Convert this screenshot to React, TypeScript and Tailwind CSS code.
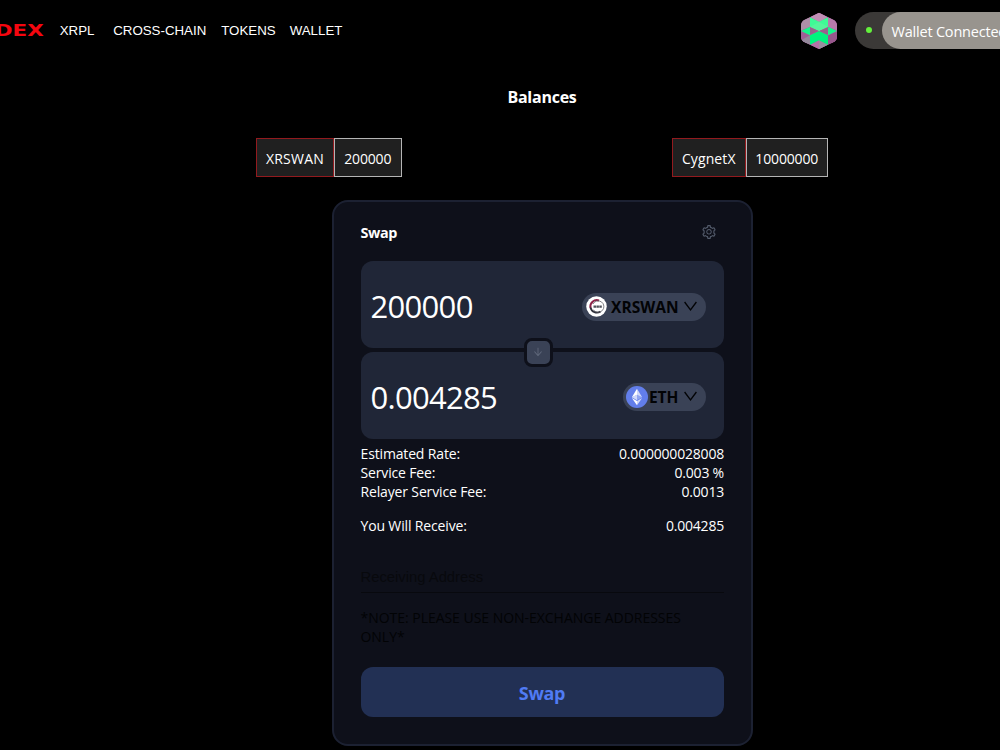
import type { ReactNode } from "react";
import { AiOutlineArrowDown, AiOutlineSetting } from "react-icons/ai";

const navItems = [
  { label: "XRPL", cls: "w-[53.5px]" },
  { label: "CROSS-CHAIN", cls: "w-[108px]" },
  { label: "TOKENS", cls: "w-[68.5px]" },
  { label: "WALLET", cls: "w-[60px]" },
];

function Avatar() {
  return (
    <svg width="38" height="38" viewBox="0 0 114 114" className="shrink-0">
      <clipPath id="hex">
        <path d="M57 2 L100 23 Q111 29 111 40 V76 Q111 85 100 91 L57 111 L14 91 Q3 85 3 76 V40 Q3 29 14 23 Z" />
      </clipPath>
      <g clipPath="url(#hex)">
        <rect width="114" height="114" fill="#a8649b" />
        <path d="M57 0 L84 15 L57 30 L30 15Z" fill="#c08fb5" />
        <path d="M0 29 L30 15 V44 L0 57Z" fill="#ad8fa8" />
        <path d="M114 29 L84 15 V44 L114 57Z" fill="#b77bab" />
        <path d="M0 57 L30 70 V98 L0 86Z" fill="#a05f96" />
        <path d="M0 86 L30 70 V98Z" fill="#94899c" />
        <path d="M114 57 L84 70 V98 L114 86Z" fill="#98578c" />
        <path d="M57 84 L84 98 L57 114 L30 98Z" fill="#b273a6" />
        <path d="M57 84 L84 98 L57 114Z" fill="#9a8e9f" />
        <path d="M30 16 L57 29 L84 16 V44 L57 56 L30 44Z" fill="#3efb96" />
        <path d="M30 44 L57 30 L84 44 L57 57Z" fill="#55f59c" />
        <path d="M30 70 L57 57 L84 70 V98 L57 85 L30 98Z" fill="#00f47d" />
        <path d="M3 57 L30 44 V70Z M111 57 L84 44 V70Z" fill="#16f78a" />
        <path d="M30 46 L56 57 L30 68Z M84 46 L58 57 L84 68Z" fill="#98618c" />
      </g>
    </svg>
  );
}

function SwanIcon() {
  return (
    <svg width="21" height="21" viewBox="0 0 42 42">
      <circle cx="21" cy="21" r="20.5" fill="#fff" />
      <path d="M26 9 A13 13 0 0 0 9 24" fill="none" stroke="#8c2348" strokeWidth="4" />
      <path d="M9 23 A13 13 0 0 0 29 31" fill="none" stroke="#30313c" strokeWidth="3.5" />
      <path d="M14 16 A11.5 11.5 0 1 1 15 28" fill="none" stroke="#55565c" strokeWidth="1.5" />
      <path d="M15 21 h17" stroke="#50525a" strokeWidth="4.5" strokeDasharray="5 .8" />
    </svg>
  );
}

function EthIcon() {
  return (
    <svg width="22" height="22" viewBox="0 0 32 32">
      <circle cx="16" cy="16" r="16" fill="#627eea" />
      <path d="M16 4v8.87l7.5 3.35z" fill="#fff" fillOpacity=".7" />
      <path d="M16 4L8.5 16.22l7.5-3.35z" fill="#fff" />
      <path d="M16 21.97V28l7.5-10.38z" fill="#fff" fillOpacity=".7" />
      <path d="M16 28v-6.03l-7.5-4.35z" fill="#fff" />
      <path d="M16 20.57l7.5-4.35-7.5-3.35z" fill="#fff" fillOpacity=".3" />
      <path d="M8.5 16.22l7.5 4.35v-7.7z" fill="#fff" fillOpacity=".7" />
    </svg>
  );
}

function ChevronDown() {
  return (
    <svg width="15" height="15" viewBox="0 0 15 15" className="mb-[1px] shrink-0">
      <path d="M1.6 3 L7.5 11 L13.4 3" fill="none" stroke="currentColor" strokeWidth="1.3" />
    </svg>
  );
}

function Balance({ name, amount, left, right }: { name: string; amount: string; left: string; right: string }) {
  return (
    <div className="flex h-[39px] text-[14px] leading-[39px] text-white">
      <div className={`${left} flex items-center justify-center border border-[#921a1e] bg-[#202020] pt-[1px]`}>{name}</div>
      <div className={`${right} flex items-center justify-center border border-[#b5b5b5] bg-[#202020] pt-[1px]`}>{amount}</div>
    </div>
  );
}

function AmountPanel({ amount, children }: { amount: string; children: ReactNode }) {
  return (
    <div className="flex h-[87px] items-center justify-between rounded-[12px] bg-[#202637] pr-[18px] pl-[10px]">
      <div className="pt-[4px] text-[31px] tracking-[-0.7px] text-white">{amount}</div>
      {children}
    </div>
  );
}

function Row({ label, value }: { label: string; value: string }) {
  return (
    <div className="flex h-[19px] items-center justify-between">
      <span className="tracking-[-0.15px]">{label}</span>
      <span className="mr-[-0.5px] tracking-[-0.2px]">{value}</span>
    </div>
  );
}

export default function App() {
  return (
    <div className="h-[750px] w-full overflow-hidden bg-black font-['Open_Sans','Noto_Sans',sans-serif]">
      <div className="w-[1084px]">
        <header className="flex h-[61px] items-center">
          <div className="flex w-[44px] justify-end">
            <span className="origin-right scale-x-[1.3] font-['DejaVu_Sans',sans-serif] text-[16.5px] leading-[20px] font-bold text-[#f5060f]">
              DEX
            </span>
          </div>
          <nav className="ml-[15.7px] flex font-['Liberation_Sans',sans-serif] text-[13.3px] text-white">
            {navItems.map((n) => (
              <a key={n.label} className={n.cls}>
                {n.label}
              </a>
            ))}
          </nav>
          <div className="ml-[450.3px] flex items-center">
            <Avatar />
            <div className="ml-[17.5px] flex h-[37px] w-[190px] items-center rounded-full bg-[#3b3937]">
              <span className="mb-[2px] ml-[11px] h-[6px] w-[6px] rounded-full bg-[#63f23c]" />
              <div className="ml-[10px] flex h-full flex-1 items-center rounded-full bg-[#98948e] pt-[2px] pl-[9px] text-[14.5px] tracking-[-0.2px] whitespace-nowrap text-white">
                Wallet Connected
              </div>
            </div>
          </div>
        </header>

        <h1 className="mt-[24px] text-center text-[16px] leading-[24px] font-bold tracking-[-0.25px] text-white">Balances</h1>
        <div className="mt-[29px] flex justify-between pr-[256px] pl-[256px]">
          <Balance name="XRSWAN" amount="200000" left="w-[78px] tracking-[0.25px]" right="w-[67.5px] tracking-[-0.15px]" />
          <Balance name="CygnetX" amount="10000000" left="w-[73.5px] tracking-[0.1px]" right="w-[82.5px] tracking-[-0.15px]" />
        </div>

        <main className="mt-[23px] ml-[331.5px] h-[545.5px] w-[421px] rounded-[16px] border-2 border-[#1c2132] bg-[#0e101a] px-[27px] pt-[18.5px]">
          <div className="flex h-[24px] items-center justify-between pr-[7px]">
            <h2 className="text-[14.4px] font-bold tracking-[-0.4px] text-white">Swap</h2>
            <AiOutlineSetting className="mb-[2px] text-[16px] text-[#535b6b]" />
          </div>
          <div className="relative mt-[16px] flex flex-col gap-[4px]">
            <AmountPanel amount="200000">
              <button className="mt-[5px] flex h-[28px] w-[124px] items-center rounded-full bg-[#3a4256] pl-[4px] text-[15.5px] font-bold text-[#020305]">
                <SwanIcon />
                <span className="ml-[4.5px] w-[72px] pt-[2px] text-left tracking-[0.05px]">XRSWAN</span>
                <ChevronDown />
              </button>
            </AmountPanel>
            <AmountPanel amount="0.004285">
              <button className="mt-[3px] flex h-[28px] w-[83px] items-center rounded-full bg-[#3a4256] pl-[3px] text-[15.5px] font-bold text-[#020305]">
                <EthIcon />
                <span className="ml-[1.5px] w-[34px] pt-[2px] text-left tracking-[-0.1px]">ETH</span>
                <ChevronDown />
              </button>
            </AmountPanel>
            <div className="absolute top-[77px] left-[163px] flex h-[29px] w-[29px] items-center justify-center rounded-[8px] border-[3px] border-[#0e101a] bg-[#3a4256]">
              <AiOutlineArrowDown className="text-[12px] text-[#60687b]" />
            </div>
          </div>

          <div className="mt-[5.5px] text-[14px] text-white">
            <Row label="Estimated Rate:" value="0.000000028008" />
            <Row label="Service Fee:" value="0.003 %" />
            <Row label="Relayer Service Fee:" value="0.0013" />
            <div className="h-[15px]" />
            <Row label="You Will Receive:" value="0.004285" />
          </div>
          <div className="mt-[30.5px] flex h-[27px] items-center border-b border-[#08090e] pb-[2px] font-['Liberation_Sans',sans-serif] text-[14.8px] text-[#08090d]">
            Receiving Address
          </div>
          <p className="mt-[15px] text-[14px] leading-[19px] tracking-[-0.03px] text-[#020305]">
            *NOTE: PLEASE USE NON-EXCHANGE ADDRESSES
            <br />
            ONLY*
          </p>
          <button className="mt-[21.5px] flex h-[50px] w-full items-center justify-center rounded-[12px] bg-[#223054] pt-[3px] text-[18px] font-bold tracking-[-0.3px] text-[#507bf5]">
            Swap
          </button>
        </main>
      </div>
    </div>
  );
}
